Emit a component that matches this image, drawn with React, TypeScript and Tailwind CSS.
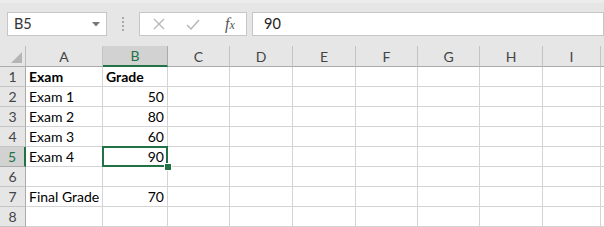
import React from 'react';

const cols = [
  { name: 'A', w: 'w-[77px]' },
  { name: 'B', w: 'w-[65px]' },
  { name: 'C', w: 'w-[62px]' },
  { name: 'D', w: 'w-[63px]' },
  { name: 'E', w: 'w-[63px]' },
  { name: 'F', w: 'w-[62px]' },
  { name: 'G', w: 'w-[62px]' },
  { name: 'H', w: 'w-[63px]' },
  { name: 'I', w: 'w-[58px]' },
];

const rows: { a?: string; b?: string; bold?: boolean }[] = [
  { a: 'Exam', b: 'Grade', bold: true },
  { a: 'Exam 1', b: '50' },
  { a: 'Exam 2', b: '80' },
  { a: 'Exam 3', b: '60' },
  { a: 'Exam 4', b: '90' },
  {},
  { a: 'Final Grade', b: '70' },
  {},
];

const App = () => {
  return (
    <div className="w-[604px] h-[227px] overflow-hidden bg-white text-[14px] text-black" style={{ fontFamily: 'Lato, "Liberation Sans", sans-serif' }}>
      {/* Formula bar */}
      <div className="h-[46px] bg-[#e6e6e6] border-t-[3px] border-[#ececec] flex items-start pt-[9px] pl-[7px]">
        <div className="w-[100px] h-[24px] bg-white border border-[#c6c6c6] flex items-center justify-between pl-[6px] pr-[6px]">
          <span className="text-[#333] text-[14.5px]">B5</span>
          <svg width="8" height="5" viewBox="0 0 8 5"><path d="M0 0h8L4 4.5z" fill="#777" /></svg>
        </div>
        <div className="w-[32px] h-[24px] flex flex-col items-center justify-center gap-[2px]">
          <span className="w-[2px] h-[2px] bg-[#aaa]" />
          <span className="w-[2px] h-[2px] bg-[#aaa]" />
          <span className="w-[2px] h-[2px] bg-[#aaa]" />
          <span className="w-[2px] h-[2px] bg-[#aaa]" />
        </div>
        <div className="w-[108px] h-[24px] bg-white border border-[#c6c6c6] flex items-center">
          <div className="w-[38px] flex justify-center">
            <svg width="12" height="12" viewBox="0 0 12 12"><path d="M1 1l10 10M11 1L1 11" stroke="#b8b8b8" strokeWidth="1.4" /></svg>
          </div>
          <div className="w-[30px] flex justify-center">
            <svg width="14" height="11" viewBox="0 0 14 11"><path d="M1 6l4 4L13 1" stroke="#b8b8b8" strokeWidth="1.5" fill="none" /></svg>
          </div>
          <div className="flex-1 flex justify-center pl-[6px]">
            <span className="italic text-[#555] text-[16px]" style={{ fontFamily: '"Liberation Serif", serif' }}>f<span className="text-[12px]">x</span></span>
          </div>
        </div>
        <div className="ml-[5px] flex-1 h-[24px] bg-white border border-[#c6c6c6] flex items-center pl-[11px]">
          <span className="text-[#222] text-[14.5px]">90</span>
        </div>
      </div>

      {/* Sheet */}
      <div className="flex flex-col">
        <div className="flex h-[21px] bg-[#e6e6e6]">
          <div className="w-[26px] border-r border-[#bdbdbd] border-b border-b-[#ababab] relative">
            <svg className="absolute right-[3px] bottom-[3px]" width="11" height="11" viewBox="0 0 11 11"><path d="M11 0v11H0z" fill="#b5b5b5" /></svg>
          </div>
          {cols.map((c) => (
            <div
              key={c.name}
              className={`${c.w} flex items-center justify-center border-r ${c.name === 'B' ? 'bg-[#d2d2d2] text-[#217346] border-b-2 border-b-[#217346] border-r-[#ababab]' : 'text-[#444] border-r-[#c4c4c4] border-b border-b-[#ababab]'}`}
            >
              {c.name}
            </div>
          ))}
          <div className="flex-1 border-b border-[#ababab]" />
        </div>
        {rows.map((r, i) => {
          const sel = i === 4;
          return (
            <div key={i} className="flex h-[20px]">
              <div className={`w-[26px] flex items-center justify-center border-b ${sel ? 'bg-[#d2d2d2] text-[#217346] border-r-2 border-r-[#217346] border-b-[#ababab]' : 'bg-[#e6e6e6] text-[#444] border-r border-r-[#ababab] border-b-[#c4c4c4]'}`}>
                {i + 1}
              </div>
              <div className={`w-[77px] flex items-center pl-[3px] border-r border-b border-[#d4d4d4] whitespace-nowrap ${r.bold ? 'font-bold' : ''}`}>
                {r.a}
              </div>
              <div className={`w-[65px] relative flex items-center border-r border-b border-[#d4d4d4] ${r.bold ? 'justify-start pl-[3px] font-bold' : 'justify-end pr-[3px]'}`}>
                {r.b}
                {sel && (
                  <>
                    <div className="absolute -left-[1px] -top-[1px] -right-[1px] -bottom-[1px] border-2 border-[#217346] pointer-events-none" />
                    <div className="absolute z-10 -right-[5px] -bottom-[5px] w-[8px] h-[8px] bg-[#217346] border border-white" />
                  </>
                )}
              </div>
              {cols.slice(2).map((c) => (
                <div key={c.name} className={`${c.w} border-r border-b border-[#d4d4d4]`} />
              ))}
              <div className="flex-1 border-b border-[#d4d4d4]" />
            </div>
          );
        })}
      </div>
    </div>
  );
};

export default App;
